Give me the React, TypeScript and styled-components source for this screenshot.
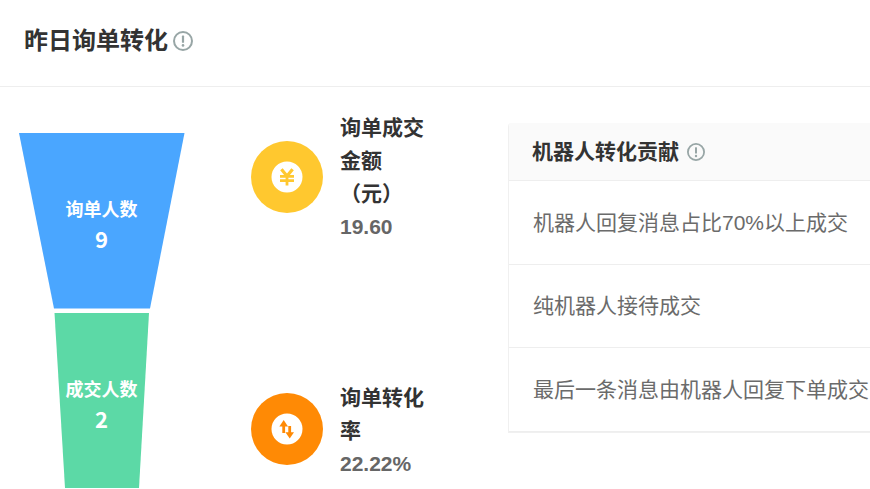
import React from "react";
import styled, { createGlobalStyle } from "styled-components";

const Global = createGlobalStyle`
  html, body { margin: 0; padding: 0; width: 870px; height: 489px; overflow: hidden; background: #fff; }
  body { font-family: "Liberation Sans", "Noto Sans CJK SC", sans-serif; }
`;

const Page = styled.div`
  width: 870px;
  height: 489px;
  overflow: hidden;
  display: flex;
  flex-direction: column;
`;

const Header = styled.header`
  flex: none;
  height: 86px;
  box-sizing: border-box;
  margin-bottom: 1px;
  box-shadow: 0 1px 0 #eeeeee;
  display: flex;
  align-items: center;
  padding: 0 0 4px 24px;
  gap: 5px;
`;

const Title = styled.h1`
  margin: 0;
  font-size: 24px;
  line-height: 32px;
  font-weight: 700;
  color: #333;
`;

const Body = styled.main`
  flex: 1;
  display: flex;
  align-items: flex-start;
  min-height: 0;
`;

const FunnelBox = styled.div`
  flex: none;
  width: 251px;
  height: 402px;
`;

const FunnelText = styled.text<{ $size: number }>`
  fill: #fff;
  font-weight: 700;
  font-size: ${(p) => p.$size}px;
  text-anchor: middle;
  font-family: "Noto Sans CJK SC", "Liberation Sans", sans-serif;
`;

const Metrics = styled.div`
  flex: none;
  width: 257px;
  display: flex;
  flex-direction: column;
`;

const Metric = styled.div<{ $top: number; $height: number }>`
  height: ${(p) => p.$height}px;
  margin-top: ${(p) => p.$top}px;
  display: flex;
  align-items: flex-start;
  gap: 17px;
`;

const IconCircle = styled.div<{ $color: string; $offset: number }>`
  flex: none;
  width: 72px;
  height: 72px;
  margin-top: ${(p) => p.$offset}px;
  border-radius: 50%;
  background: ${(p) => p.$color};
  display: flex;
  align-items: center;
  justify-content: center;
`;

const MetricText = styled.div<{ $pad: number }>`
  width: 90px;
  padding-top: ${(p) => p.$pad}px;
`;

const MetricTitle = styled.div`
  font-size: 21px;
  line-height: 33px;
  font-weight: 700;
  color: #333;
`;

const MetricValue = styled.div`
  font-size: 21px;
  line-height: 33px;
  font-weight: 700;
  color: #666;
`;

const Panel = styled.section`
  flex: none;
  width: 500px;
  margin-top: 36px;
  border: 1px solid #f0f0f0;
  border-top: none;
  border-radius: 4px 0 0 0;
  overflow: hidden;
`;

const PanelHead = styled.div`
  height: 57px;
  background: #fafafa;
  border-bottom: 1px solid #eeeeee;
  display: flex;
  align-items: center;
  padding-left: 23px;
  gap: 8px;
`;

const PanelTitle = styled.h2`
  margin: 0;
  font-size: 21px;
  line-height: 30px;
  font-weight: 700;
  color: #333;
`;

const Row = styled.div<{ $h: number }>`
  height: ${(p) => p.$h}px;
  box-sizing: border-box;
  border-bottom: 1px solid #eeeeee;
  display: flex;
  align-items: center;
  padding: 0 0 4px 24px;
  font-size: 21px;
  color: #6b6b6b;
  white-space: nowrap;
`;

const InfoIcon = ({ size }: { size: number }) => (
  <svg width={size} height={size} viewBox="0 0 20 20" fill="none">
    <circle cx="10" cy="10" r="9" stroke="#98a6a6" strokeWidth="2" />
    <rect x="8.9" y="4.6" width="2.2" height="7.2" rx="0.6" fill="#98a6a6" />
    <circle cx="10" cy="14.4" r="1.3" fill="#98a6a6" />
  </svg>
);

const YenIcon = () => (
  <svg width="32" height="32" viewBox="0 0 32 32">
    <circle cx="16" cy="16" r="15.5" fill="#fff" />
    <path d="M10.4 8.2 16 15 21.6 8.2" fill="none" stroke="#ffc82f" strokeWidth="3.2" />
    <path d="M9 15.4h14M9 19.6h14M16 14.5v10" fill="none" stroke="#ffc82f" strokeWidth="2.8" />
  </svg>
);

const SwapIcon = () => (
  <svg width="32" height="32" viewBox="0 0 32 32">
    <circle cx="16" cy="16" r="15.5" fill="#fff" />
    <path d="M12.7 12v8" fill="none" stroke="#ff8a05" strokeWidth="2.8" />
    <path d="M8.4 13.4 12.7 7 17 13.4Z" fill="#ff8a05" />
    <path d="M18.7 13v7" fill="none" stroke="#ff8a05" strokeWidth="2.8" />
    <path d="M14.4 19.2 18.7 25.6 23 19.2Z" fill="#ff8a05" />
  </svg>
);

export default function App() {
  return (
    <Page>
      <Global />
      <Header>
        <Title>昨日询单转化</Title>
        <InfoIcon size={20} />
      </Header>
      <Body>
        <FunnelBox>
          <svg width="251" height="402" viewBox="0 87 251 402">
            <polygon points="19,133 184.5,133 150,308.5 54,308.5" fill="#4aa6ff" />
            <polygon points="54.5,313 149,313 139,488 65,488" fill="#5cd9a6" />
            <FunnelText $size={18} x="101.5" y="216">询单人数</FunnelText>
            <FunnelText $size={22} x="101.5" y="248">9</FunnelText>
            <FunnelText $size={18} x="101.5" y="396">成交人数</FunnelText>
            <FunnelText $size={22} x="101.5" y="428">2</FunnelText>
          </svg>
        </FunnelBox>
        <Metrics>
          <Metric $top={24} $height={252}>
            <IconCircle $color="#ffc82f" $offset={30}><YenIcon /></IconCircle>
            <MetricText $pad={0}>
              <MetricTitle>询单成交金额（元）</MetricTitle>
              <MetricValue>19.60</MetricValue>
            </MetricText>
          </Metric>
          <Metric $top={0} $height={100}>
            <IconCircle $color="#ff8a05" $offset={30}><SwapIcon /></IconCircle>
            <MetricText $pad={18}>
              <MetricTitle>询单转化率</MetricTitle>
              <MetricValue>22.22%</MetricValue>
            </MetricText>
          </Metric>
        </Metrics>
        <Panel>
          <PanelHead>
            <PanelTitle>机器人转化贡献</PanelTitle>
            <InfoIcon size={18} />
          </PanelHead>
          <Row $h={84}>机器人回复消息占比70%以上成交</Row>
          <Row $h={83}>纯机器人接待成交</Row>
          <Row $h={84}>最后一条消息由机器人回复下单成交</Row>
        </Panel>
      </Body>
    </Page>
  );
}
